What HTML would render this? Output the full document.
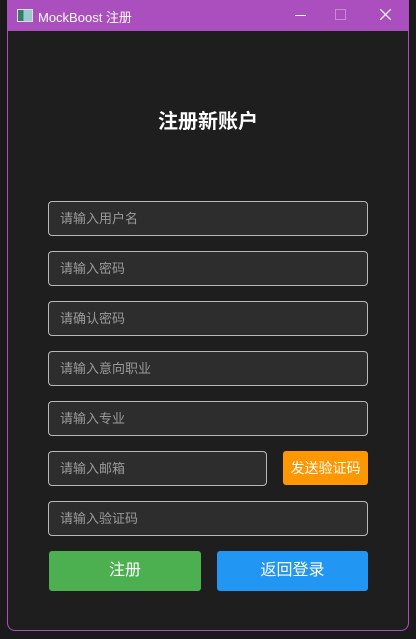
<!DOCTYPE html>
<html><head><meta charset="utf-8"><style>
body{margin:0;width:416px;height:639px;background:#1a1a1a;overflow:hidden;position:relative;font-family:"Liberation Sans","Noto Sans CJK SC",sans-serif}
.win{position:absolute;left:7px;top:0;width:400px;height:630px;background:#1e1e1e;border:1px solid #ab4fbe;border-top:none;border-radius:0 0 8px 8px;overflow:hidden}
.tb{height:31px;background:#ab4fbe;color:#fff;font-size:13px;position:relative}
.tb .t{position:absolute;left:30px;top:7px}
.ic{position:absolute;left:9px;top:9px;width:14px;height:11px;border:1px solid #ddd;background:linear-gradient(90deg,#3a7a6a 40%,#9cc 40%)}
.h{position:absolute;top:105px;left:0;width:400px;text-align:center;color:#fff;font-size:20px;font-weight:bold}
.f{position:absolute;left:40px;width:318px;height:33px;border:1px solid #b8b8b8;border-radius:4px;background:#2d2d2d;color:#9a9a9a;font-size:13px;line-height:33px;padding-left:11px;box-sizing:content-box}
.b{position:absolute;border-radius:3px;color:#fff;text-align:center}
</style></head><body>
<div class="win">
<div class="tb"><div class="ic"></div><span class="t">MockBoost 注册</span>
<div style="position:absolute;left:287px;top:15px;width:11px;height:1px;background:#fff"></div>
<div style="position:absolute;left:327px;top:9px;width:9px;height:9px;border:1px solid #c78ad3"></div>
<svg style="position:absolute;left:372px;top:9px" width="11" height="11"><path d="M0 0L11 11M11 0L0 11" stroke="#fff" stroke-width="1.2"/></svg>
</div>
<div class="h">注册新账户</div>
<div class="f" style="top:201px;width:307px">请输入用户名</div>
<div class="f" style="top:251px;width:307px">请输入密码</div>
<div class="f" style="top:301px;width:307px">请确认密码</div>
<div class="f" style="top:351px;width:307px">请输入意向职业</div>
<div class="f" style="top:401px;width:307px">请输入专业</div>
<div class="f" style="top:451px;width:206px">请输入邮箱</div>
<div class="b" style="left:275px;top:451px;width:85px;height:34px;line-height:34px;background:#ff9800;font-size:14px">发送验证码</div>
<div class="f" style="top:501px;width:307px">请输入验证码</div>
<div class="b" style="left:41px;top:551px;width:152px;height:40px;line-height:40px;background:#4caf50;font-size:16px">注册</div>
<div class="b" style="left:209px;top:551px;width:151px;height:40px;line-height:40px;background:#2196f3;font-size:16px">返回登录</div>
</div>
</body></html>
